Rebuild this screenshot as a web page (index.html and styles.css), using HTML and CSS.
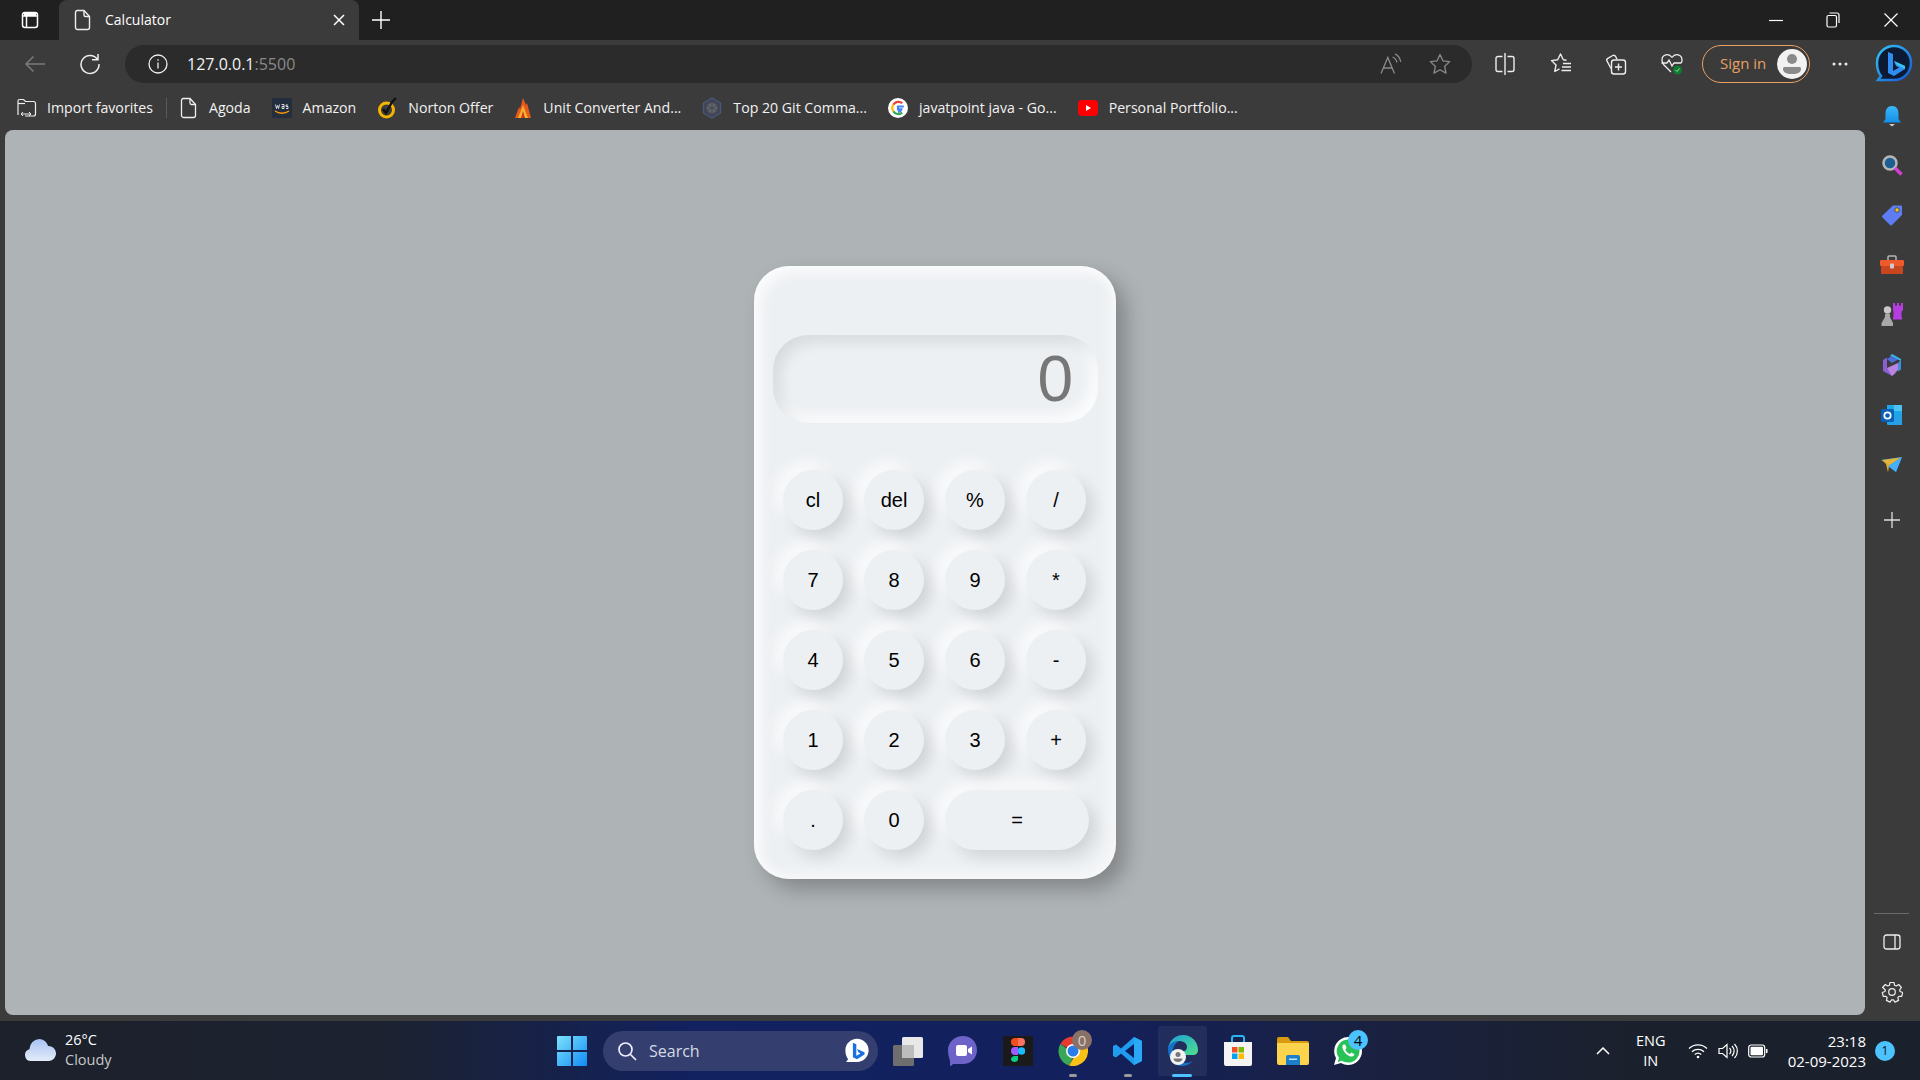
FILE: index.html
```html
<!DOCTYPE html>
<html lang="en">
<head>
  <meta charset="UTF-8">
  <title>Calculator</title>
  <link rel="stylesheet" href="styles.css">
</head>
<body>
  <div class="tabstrip">
    <svg class="tab-menu" width="20" height="20" viewBox="0 0 20 20" fill="none" stroke="#fff" stroke-width="1.5"><rect x="2.5" y="2.5" width="15" height="15" rx="2.5"/><path d="M2.5 6h15M6.5 6v11.5"/><path d="M4 3h12v3H4z" fill="#fff" stroke="none"/></svg>
    <div class="tab">
      <svg width="18" height="22" viewBox="0 0 18 22" fill="none" stroke="#eee" stroke-width="1.4"><path d="M3 1.5h7l5.5 6v11a2 2 0 0 1-2 2H3.500a2 2 0 0 1-2-2v-15a2 2 0 0 1 1.500-2z"/><path d="M10 1.500v4.500a1.500 1.500 0 0 0 1.500 1.500h4"/></svg>
      <span class="tab-title">Calculator</span>
      <svg class="tab-close" width="14" height="14" viewBox="0 0 14 14" stroke="#fff" stroke-width="1.5"><path d="M2 2l10 10M12 2L2 12"/></svg>
    </div>
    <svg class="tab-new" width="18" height="18" viewBox="0 0 18 18" stroke="#fff" stroke-width="1.4"><path d="M9 0v18M0 9h18"/></svg>
    <div class="win-controls">
      <svg class="win-min" width="14" height="14" viewBox="0 0 14 14" stroke="#fff" stroke-width="1.2"><path d="M0 7.500h14"/></svg>
      <svg width="14" height="16" viewBox="0 0 14 16" fill="none" stroke="#fff" stroke-width="1.2"><rect x="1" y="3.500" width="9.500" height="11.500" rx="1.500"/><path d="M3.500 1h7.500a2 2 0 0 1 2 2v8"/></svg>
      <svg width="14" height="14" viewBox="0 0 14 14" stroke="#fff" stroke-width="1.2"><path d="M.5.500l13 13M13.500.500l-13 13"/></svg>
    </div>
  </div>

  <div class="toolbar">
    <svg class="tool back" width="22" height="18" viewBox="0 0 22 18" fill="none" stroke="#7b7b7b" stroke-width="1.500"><path d="M21 9H2M9.500 1.500L2 9l7.500 7.500"/></svg>
    <svg class="tool reload" width="22" height="22" viewBox="0 0 22 22" fill="none" stroke="#eee" stroke-width="1.500"><path d="M18.500 6.500A9 9 0 1 0 20 11"/><path d="M13 6.800h6V1"/></svg>
    <div class="address">
      <svg width="20" height="20" viewBox="0 0 20 20" fill="none" stroke="#eee" stroke-width="1.300"><circle cx="10" cy="10" r="9"/><path d="M10 8.500v6M10 5.200v1.600"/></svg>
      <span class="url">127.0.0.1<span class="port">:5500</span></span>
      <svg class="read-aloud" width="22" height="22" viewBox="0 0 22 22" fill="none" stroke="#8a8a8a" stroke-width="1.300"><path d="M1 20.500L7.800 4.500l6.700 16M3.300 15h9"/><path d="M12.500 4c2.500 1 4 3 4.500 5.500M15 .800c3 1.500 5 4 5.700 8"/></svg>
      <svg class="fav-star" width="22" height="22" viewBox="0 0 22 22" fill="none" stroke="#8a8a8a" stroke-width="1.300"><path d="M11 1.500l2.900 6.300 6.800.800-5 4.700 1.300 6.800-6-3.400-6 3.400 1.300-6.800-5-4.700 6.800-.800z" stroke-linejoin="round"/></svg>
    </div>
    <div class="tool-group">
      <svg class="tool-split" width="20" height="22" viewBox="0 0 20 22" fill="none" stroke="#eee" stroke-width="1.400"><path d="M10 0v22"/><path d="M7.500 3.500H3a2 2 0 0 0-2 2v11a2 2 0 0 0 2 2h4.500M12.500 3.500H17a2 2 0 0 1 2 2v11a2 2 0 0 1-2 2h-4.500"/></svg>
      <svg width="22" height="22" viewBox="0 0 22 22" fill="none" stroke="#eee" stroke-width="1.400"><path d="M16.500 7.200L13.300 6.800 10.500 1 7.700 6.800 1.500 7.600l4.500 4.300L4.800 18.500l4.700-2.600" stroke-linejoin="round"/><path d="M13 10.500h8M12 14h9M11.500 17.500h9.500"/></svg>
      <svg width="22" height="22" viewBox="0 0 22 22" fill="none" stroke="#eee" stroke-width="1.400"><path d="M6 15.500L2 8a2 2 0 0 1 .8-2.700l5-2.800a2 2 0 0 1 2.700.8l1.500 3"/><rect x="6.500" y="7" width="14" height="14" rx="2.500"/><path d="M13.500 10.500v7M10 14h7"/></svg>
      <svg width="24" height="24" viewBox="0 0 24 24" fill="none" stroke="#eee" stroke-width="1.300"><path d="M12 5.500C9 1 2 2 2 8c0 2 .8 3.500 2 5l7 7"/><path d="M12 5.500C15 1 22 2 22 8c0 1.200-.3 2.300-.8 3.300"/><path d="M1.500 11H7l2-3 3 6 2-3h7"/><circle cx="17.500" cy="18" r="4.500" fill="#0f7b2e" stroke="none"/><path d="M15.500 18l1.500 1.500 2.500-3" stroke="#9fdc9f" stroke-width="1"/></svg>
    </div>
    <div class="signin">
      <span class="signin-label">Sign in</span>
      <span class="avatar"><svg width="20" height="24" viewBox="0 0 20 24" fill="#8a8a8a"><circle cx="10" cy="7" r="5"/><path d="M2 15h16a2 2 0 0 1 1 2c0 3-3 5-9 5s-9-2-9-5a2 2 0 0 1 1-2z"/></svg></span>
    </div>
    <svg class="more" width="16" height="4" viewBox="0 0 16 4" fill="#eee"><circle cx="2" cy="2" r="1.500"/><circle cx="8" cy="2" r="1.500"/><circle cx="14" cy="2" r="1.500"/></svg>
    <svg class="bing" width="38" height="40" viewBox="0 0 38 40" fill="none"><defs><linearGradient id="bingRing" x1="0" y1="0" x2="1" y2="1"><stop offset="0" stop-color="#36c3f0"/><stop offset="1" stop-color="#1457d6"/></linearGradient></defs><path d="M19 2c9.500 0 17 7.500 17 17s-7.500 17-17 17H3l3-4C3.500 29 2 24 2 19 2 9.500 9.500 2 19 2z" fill="#0c1b33" stroke="url(#bingRing)" stroke-width="2.500"/><path d="M13 8l5 2v17l6-3.500-3-1.500-2-5 11 5v3l-11 7-6-3z" fill="#2f8cf0"/><path d="M19 17l11 5v3L22 21z" fill="#37c6f4"/></svg>
  </div>

  <div class="workspace">
    <div class="browser-left">
      <div class="bookmarks">
        <div class="bookmark bookmark-import">
          <svg width="20" height="20" viewBox="0 0 20 20" fill="none" stroke="#eee" stroke-width="1.200"><path d="M1 17V3a1.500 1.500 0 0 1 1.500-1.500h4l2 2h8a2 2 0 0 1 2 2v10.500a2 2 0 0 1-2 2H8"/><path d="M1 5.500h7"/><path d="M4 16h10M6 14l-2 2 2 2M12 14l2 2-2 2" stroke-width="1"/></svg>
          <span>Import favorites</span>
        </div>
        <span class="bookmark-sep"></span>
        <div class="bookmark">
          <svg width="18" height="22" viewBox="0 0 18 22" fill="none" stroke="#eee" stroke-width="1.300"><path d="M3 1.500h7l5.500 6v11a2 2 0 0 1-2 2H3.500a2 2 0 0 1-2-2v-15a2 2 0 0 1 1.500-2z"/><path d="M10 1.500v4.500a1.500 1.500 0 0 0 1.500 1.500h4"/></svg>
          <span>Agoda</span>
        </div>
        <div class="bookmark">
          <svg width="20" height="20" viewBox="0 0 20 20"><rect width="20" height="20" fill="#232f3e"/><path d="M3 13c4 3 10 3 14 0" fill="none" stroke="#f90" stroke-width="1.300"/><path d="M3.500 6.500l1 4 1-3 1 3 1-4M9.500 6.500h2.500v4M12 8.500h-2v2h2M16 7h-2v1.500h2v2h-2" fill="none" stroke="#fff" stroke-width=".8"/></svg>
          <span>Amazon</span>
        </div>
        <div class="bookmark">
          <svg width="20" height="22" viewBox="0 0 20 22" fill="none"><circle cx="9.500" cy="13" r="7" stroke="#f5b400" stroke-width="3"/><path d="M6 12l3 4L15 5l4-4" stroke="#111" stroke-width="2.400"/></svg>
          <span>Norton Offer</span>
        </div>
        <div class="bookmark">
          <svg width="18" height="22" viewBox="0 0 18 22"><path d="M9 1l3 7 1-2 4 15H1L5 10l1 2z" fill="#e8591c"/><path d="M9 8l3 8 2 5H4l2-5z" fill="#f7b32b"/><path d="M9 14l2 7H7z" fill="#c8391c"/></svg>
          <span>Unit Converter And...</span>
        </div>
        <div class="bookmark">
          <svg width="20" height="22" viewBox="0 0 20 22" fill="#3f4552" stroke="#48587e"><path d="M10 1l8.500 5v10L10 21l-8.500-5V6z" stroke-width="1.300"/><circle cx="10" cy="11" r="5.500" fill="#62656d" stroke="#4c4f58"/><path d="M10 5.500v11M5 8.500l10 5M15 8.500l-10 5" stroke="#3f4552" stroke-width=".8"/></svg>
          <span>Top 20 Git Comma...</span>
        </div>
        <div class="bookmark">
          <svg width="20" height="20" viewBox="0 0 20 20" fill="none"><circle cx="10" cy="10" r="10" fill="#fff"/><path d="M15.800 8.500H10v2.800h3.300c-.4 1.600-1.700 2.500-3.300 2.500" stroke="#4285f4" stroke-width="2.200"/><path d="M14.300 5.200a6 6 0 0 0-8.900 1.400" stroke="#ea4335" stroke-width="2.200"/><path d="M5.400 6.600a6 6 0 0 0 0 6.800" stroke="#fbbc05" stroke-width="2.200"/><path d="M5.400 13.400a6 6 0 0 0 8.800 1.300" stroke="#34a853" stroke-width="2.200"/></svg>
          <span>javatpoint java - Go...</span>
        </div>
        <div class="bookmark">
          <svg width="20" height="16" viewBox="0 0 20 16"><rect width="20" height="16" rx="4" fill="#f00"/><path d="M8 5l5 3-5 3z" fill="#fff"/></svg>
          <span>Personal Portfolio...</span>
        </div>
      </div>

      <main class="viewport">
        <div class="calculator">
          <div class="display">0</div>
          <div class="keys">
            <button>cl</button>
            <button>del</button>
            <button>%</button>
            <button>/</button>
            <button>7</button>
            <button>8</button>
            <button>9</button>
            <button>*</button>
            <button>4</button>
            <button>5</button>
            <button>6</button>
            <button>-</button>
            <button>1</button>
            <button>2</button>
            <button>3</button>
            <button>+</button>
            <button>.</button>
            <button>0</button>
            <button class="equals">=</button>
          </div>
        </div>
      </main>
    </div>

    <aside class="sidebar">
      <div class="side-icon side-bell">
        <svg width="20" height="22" viewBox="0 0 20 22"><defs><linearGradient id="bell" x1="0" y1="0" x2="0" y2="1"><stop offset="0" stop-color="#3ab8f8"/><stop offset="1" stop-color="#148fe8"/></linearGradient></defs><path d="M10 0c4.500 0 6.500 3.500 6.500 7.500V13l2.500 3.500H1L3.500 13V7.500C3.500 3.500 5.500 0 10 0z" fill="url(#bell)"/><path d="M7 18h6l-3 2.500z" fill="#ccc"/></svg>
      </div>
      <div class="side-icon">
        <svg width="22" height="22" viewBox="0 0 22 22" fill="none"><circle cx="9" cy="9" r="6.500" fill="#1d5e92" stroke="#b5b5b5" stroke-width="2.500"/><path d="M14 14l6.500 6.500" stroke="#d23fd2" stroke-width="3.500"/></svg>
      </div>
      <div class="side-icon">
        <svg width="22" height="22" viewBox="0 0 22 22"><path d="M12 1.500h8a1 1 0 0 1 1 1V11L11 21a1.500 1.500 0 0 1-2 0L1.500 13.500a1.500 1.500 0 0 1 0-2z" fill="#5f7df2"/><circle cx="16" cy="6" r="2.200" fill="#f5c518" stroke="#233" stroke-width=".7"/></svg>
      </div>
      <div class="side-icon">
        <svg width="24" height="20" viewBox="0 0 24 20"><path d="M8 5V2a1 1 0 0 1 1-1h6a1 1 0 0 1 1 1v3" fill="none" stroke="#b5b5b5" stroke-width="1.500"/><rect y="5" width="24" height="6" rx="1" fill="#ee5a2b"/><rect x="1" y="11" width="22" height="8" rx="1" fill="#c8461f"/><rect x="10" y="8.500" width="4" height="5" rx="1" fill="#ccc"/></svg>
      </div>
      <div class="side-icon">
        <svg width="24" height="24" viewBox="0 0 24 24"><path d="M14 0h2v2.500h2V0h2v2.500h2V0h2v7l-1.500 2V14H23v2.500h-9V14h.5V9L14 7z" fill="#b63ee0" transform="translate(-1 0)"/><circle cx="7.500" cy="7" r="3.700" fill="#c8c8c8"/><path d="M5 11h5v3l3 6v3H1.500v-3l3.500-6z" fill="#a8a8a8"/></svg>
      </div>
      <div class="side-icon">
        <svg width="22" height="24" viewBox="0 0 22 24" fill="none"><path d="M11 1l9 5v2L9 3z" fill="#35b8e8"/><path d="M20 6.500v10l-3 2V10z" fill="#3f8ce0"/><path d="M2 7l4-2.500L6 15l9 5-4 3-9-5z" fill="#8b5fd0"/><path d="M6 15l11-5v7l-6 6z" fill="#b886e0"/><path d="M6 6l5-3 6 3.500L11 10z" fill="#4d6ed8"/></svg>
      </div>
      <div class="side-icon">
        <svg width="22" height="22" viewBox="0 0 22 22"><path d="M6 1h15v19a1 1 0 0 1-1 1H7a1 1 0 0 1-1-1z" fill="#1ea7e8"/><path d="M13 1h8v6h-8z" fill="#4ec3f0"/><path d="M10 13l11-2v10H9z" fill="#27a0e8"/><rect y="5" width="13" height="13" rx="1.500" fill="#0a5fb8"/><circle cx="6.500" cy="11.500" r="3.200" fill="none" stroke="#fff" stroke-width="1.700"/></svg>
      </div>
      <div class="side-icon">
        <svg width="22" height="16" viewBox="0 0 22 16"><path d="M0 3l21-3-12 8z" fill="#38a5f5"/><path d="M21 0l-6 15-7-5z" fill="#2784e6"/><path d="M1 3l19-2.500L8 9l-1 6.500L5 7z" fill="#f5b622" opacity=".9"/><path d="M21 0L7 9l8 6z" fill="#46aff8"/></svg>
      </div>
      <div class="side-icon side-add">
        <svg width="16" height="16" viewBox="0 0 16 16" stroke="#ddd" stroke-width="1.300"><path d="M8 0v16M0 8h16"/></svg>
      </div>
      <div class="side-bottom">
        <span class="side-sep"></span>
        <div class="side-icon">
          <svg width="18" height="16" viewBox="0 0 18 16" fill="none" stroke="#eee" stroke-width="1.300"><rect x="1" y="1" width="16" height="14" rx="2.500"/><path d="M12 1v14"/></svg>
        </div>
        <div class="side-icon">
          <svg width="22" height="22" viewBox="0 0 22 22" fill="none" stroke="#eee" stroke-width="1.200"><path d="M9 1.500h4l.6 2.800 1.700.7 2.400-1.500 2.700 3-1.700 2.300.4 1.700 2.600 1-.9 3.900-2.800-.1-1.200 1.400.8 2.700-3.600 1.700-1.600-2.300h-1.800l-1.600 2.300-3.600-1.700.8-2.700-1.200-1.400-2.800.1-.9-3.900 2.600-1 .4-1.700L1.600 6.500l2.700-3 2.400 1.500 1.700-.7z" stroke-linejoin="round"/><circle cx="11" cy="11" r="3.300"/></svg>
        </div>
      </div>
    </aside>
  </div>

  <footer class="taskbar">
    <div class="weather">
      <svg width="32" height="24" viewBox="0 0 32 24"><defs><linearGradient id="cloud" x1="0" y1="0" x2="0" y2="1"><stop offset="0" stop-color="#a7c2f2"/><stop offset="1" stop-color="#e4ecfa"/></linearGradient></defs><path d="M7 23a6 6 0 0 1-1.500-11.800A10 10 0 0 1 15 1c4.500 0 8 3 9 7a7.500 7.500 0 0 1 1 15z" fill="url(#cloud)"/></svg>
      <div class="weather-text">
        <span>26°C</span>
        <span class="weather-sub">Cloudy</span>
      </div>
    </div>
    <div class="task-center">
      <svg class="start" width="30" height="30" viewBox="0 0 30 30"><defs><linearGradient id="win" x1="0" y1="0" x2="1" y2="1"><stop offset="0" stop-color="#7ee2fb"/><stop offset="1" stop-color="#0f8cf5"/></linearGradient></defs><path d="M0 1a1 1 0 0 1 1-1h13v14H0zM16 0h13a1 1 0 0 1 1 1v13H16zM0 16h14v14H1a1 1 0 0 1-1-1zM16 16h14v13a1 1 0 0 1-1 1H16z" fill="url(#win)"/></svg>
      <div class="search">
        <svg width="20" height="20" viewBox="0 0 20 20" fill="none" stroke="#eef" stroke-width="1.700"><circle cx="8.500" cy="8.500" r="6.500"/><path d="M13.500 13.500l5.500 5.500"/></svg>
        <span>Search</span>
        <svg class="search-bing" width="26" height="28" viewBox="0 0 38 40"><path d="M19 2c9.500 0 17 7.500 17 17s-7.500 17-17 17H3l3-4C3.500 29 2 24 2 19 2 9.500 9.500 2 19 2z" fill="#fff"/><path d="M13 8l5 2v17l6-3.500-3-1.500-2-5 11 5v3l-11 7-6-3z" fill="#1b6fe0"/></svg>
      </div>
      <div class="task-icon">
        <svg width="30" height="30" viewBox="0 0 30 30"><rect x="9" y="1" width="21" height="21" rx="1.500" fill="#e8e8e8"/><rect y="9" width="21" height="21" rx="1.500" fill="#6e6e6e"/><rect x="9" y="9" width="12" height="13" fill="#bdbdbd"/></svg>
      </div>
      <div class="task-icon">
        <svg width="30" height="32" viewBox="0 0 30 32"><path d="M15 1c8 0 14 6 14 14s-6 14-14 14H5l-2 2c-1 0-1-1-1-2v-3C1 23 0 19 0 15 0 7 7 1 15 1z" fill="#6e63c8"/><rect x="8" y="10" width="11" height="11" rx="2" fill="#fff"/><path d="M20 14l4-2.500v8L20 17z" fill="#fff"/></svg>
      </div>
      <div class="task-icon">
        <span class="figma-tile">
          <svg width="14" height="26" viewBox="0 0 14 26"><path d="M0 4a4 4 0 0 1 4-4h3v8H4a4 4 0 0 1-4-4z" fill="#f24e1e"/><path d="M7 0h3a4 4 0 0 1 0 8H7z" fill="#ff7262"/><path d="M0 13a4 4 0 0 1 4-4h3v8H4a4 4 0 0 1-4-4z" fill="#a259ff"/><circle cx="10.500" cy="13" r="3.800" fill="#1abcfe"/><path d="M0 22a4 4 0 0 1 4-4h3v4a4 4 0 0 1-7 0z" fill="#0acf83"/></svg>
        </span>
      </div>
      <div class="task-icon running">
        <svg width="30" height="30" viewBox="0 0 30 30"><path d="M15 15L2.300 8A15 15 0 0 1 28 7.500H15z" fill="#e33b2e"/><path d="M2.300 8A15 15 0 0 0 11 29.500L17 18z" fill="#3aa757"/><path d="M28 7.500A15 15 0 0 1 11 29.500L19 16z" fill="#fbc116"/><circle cx="15" cy="15" r="7" fill="#fff"/><circle cx="15" cy="15" r="5.500" fill="#2a7de8"/></svg>
        <span class="count chrome-count">0</span>
      </div>
      <div class="task-icon running">
        <svg width="30" height="30" viewBox="0 0 30 30"><path d="M21 1l8 4v20l-8 4L8 17.500 3 21.500 0 20V10l3-1.500 5 4z" fill="#1f9cf0"/><path d="M21 8L12 15l9 7z" fill="#0b1e5c"/><path d="M21 1l8 4v20l-8 4z" fill="#2aa8f5"/></svg>
      </div>
      <div class="task-icon active">
        <svg width="32" height="34" viewBox="0 0 32 34"><defs><linearGradient id="edge" x1="0" y1="0" x2="1" y2="1"><stop offset="0" stop-color="#1e9fd8"/><stop offset="1" stop-color="#4fe08a"/></linearGradient></defs><path d="M16 1c9 0 15 7 15 15 0 3-2 5-5 5h-7c-2 0-3-1-3-2 0-2 4-2 4-6 0-4-4-6-8-6-5 0-10 4-11 8C2 7 8 1 16 1z" fill="url(#edge)"/><path d="M1 15c0-4 5-8 11-8-5 3-7 8-6 13 1 5 5 9 12 9 3 0 6-1 8-2-3 3-7 5-11 5C7 32 1 25 1 15z" fill="#1470c8"/><circle cx="11" cy="23" r="8" fill="#f2f2f2"/><circle cx="11" cy="20.500" r="2.500" fill="#777"/><path d="M6.500 24.500h9c0 2-2 3.500-4.500 3.500s-4.500-1.500-4.500-3.500z" fill="#777"/></svg>
      </div>
      <div class="task-icon">
        <svg width="30" height="32" viewBox="0 0 30 32"><path d="M9 7V3a2 2 0 0 1 2-2h8a2 2 0 0 1 2 2v4" fill="none" stroke="#2bb5f0" stroke-width="2"/><path d="M1 7h28v22a2 2 0 0 1-2 2H3a2 2 0 0 1-2-2z" fill="#f4f4f4"/><rect x="9" y="12" width="5.500" height="5.500" fill="#f25022"/><rect x="15.500" y="12" width="5.500" height="5.500" fill="#7fba00"/><rect x="9" y="18.500" width="5.500" height="5.500" fill="#00a4ef"/><rect x="15.500" y="18.500" width="5.500" height="5.500" fill="#ffb900"/></svg>
      </div>
      <div class="task-icon">
        <svg width="32" height="28" viewBox="0 0 32 28"><path d="M0 2a2 2 0 0 1 2-2h9l3 4h16a2 2 0 0 1 2 2v4H0z" fill="#d99a10"/><path d="M0 6h32v20a2 2 0 0 1-2 2H2a2 2 0 0 1-2-2z" fill="#fbd34d"/><path d="M9 20a2 2 0 0 1 2-2h10a2 2 0 0 1 2 2v8H9z" fill="#1b7fc9"/><rect x="12" y="21.500" width="8" height="1.500" fill="#bfe4ff"/></svg>
      </div>
      <div class="task-icon">
        <svg width="30" height="30" viewBox="0 0 30 30"><path d="M15 1a14 14 0 0 1 0 28c-2.500 0-5-.700-7-2l-7 2 2-7A14 14 0 0 1 15 1z" fill="#fff"/><path d="M15 3.500a11.500 11.500 0 0 1 0 23c-2.300 0-4.300-.600-6-1.700l-4.300 1.200L6 21.800A11.500 11.500 0 0 1 15 3.500z" fill="#29c257"/><path d="M10.500 8.500c-1.500 1.200-1.500 3.300 0 6 1.500 2.700 4 5 7 6 1.700.400 3.500-.5 4-2.300l-3.200-1.700-1.500 1.500c-2-.8-3.700-2.500-4.500-4.500l1.300-1.500-1.500-3.500z" fill="#fff"/></svg>
        <span class="count whatsapp-count">4</span>
      </div>
    </div>
    <div class="tray">
      <svg class="tray-up" width="14" height="8" viewBox="0 0 14 8" fill="none" stroke="#fff" stroke-width="1.500"><path d="M1 7l6-6 6 6"/></svg>
      <div class="lang"><span>ENG</span><span>IN</span></div>
      <svg width="20" height="16" viewBox="0 0 20 16" fill="none" stroke="#fff" stroke-width="1.300"><path d="M1 5.500a13 13 0 0 1 18 0M4 8.700a9 9 0 0 1 12 0M6.800 11.500a5 5 0 0 1 6.400 0"/><circle cx="10" cy="14" r="1.300" fill="#fff" stroke="none"/></svg>
      <svg width="20" height="16" viewBox="0 0 20 16" fill="none" stroke="#fff" stroke-width="1.200"><path d="M1 5.500h3.500L9 1.500v13l-4.500-4H1z"/><path d="M11.500 5a4 4 0 0 1 0 6M14 3a7 7 0 0 1 0 10M16.500 1a10 10 0 0 1 0 14"/></svg>
      <svg width="20" height="14" viewBox="0 0 20 14"><rect x=".7" y="1" width="16" height="12" rx="2.500" fill="none" stroke="#fff" stroke-width="1.200"/><rect x="2.500" y="2.800" width="12.500" height="8.400" rx="1" fill="#fff"/><path d="M18 5h1.500v4H18z" fill="#fff"/></svg>
      <div class="clock"><span>23:18</span><span>02-09-2023</span></div>
      <span class="notify">1</span>
    </div>
  </footer>
</body>
</html>
```

FILE: styles.css
```css
* {
  box-sizing: border-box;
}
body {
  margin: 0;
  width: 1920px;
  height: 1080px;
  overflow: hidden;
  display: flex;
  flex-direction: column;
  background-color: #3b3b3b;
  color: #fff;
  font-family: "Open Sans", "Noto Sans", sans-serif;
  font-size: 14px;
}
svg {
  flex-shrink: 0;
  display: block;
}

/* title strip */
.tabstrip {
  height: 40px;
  display: flex;
  align-items: center;
  background-color: #202020;
  padding-left: 20px;
}
.tab {
  height: 40px;
  width: 300px;
  margin-left: 19px;
  padding: 0 13px 0 15px;
  display: flex;
  align-items: center;
  background-color: #3b3b3b;
  border-radius: 8px 8px 0 0;
}
.tab-title {
  margin-left: 13px;
  padding-bottom: 2px;
}
.tab-close {
  margin-left: auto;
}
.tab-new {
  margin-left: 13px;
}
.win-controls {
  margin-left: auto;
  margin-right: 22px;
  display: flex;
  align-items: center;
  gap: 44px;
}
.win-min {
  margin-right: -1px;
}

/* toolbar */
.toolbar {
  height: 43px;
  padding-top: 5px;
  display: flex;
  align-items: center;
  background-color: #3b3b3b;
}
.back {
  margin-left: 24px;
}
.reload {
  margin-left: 33px;
}
.address {
  width: 1347px;
  height: 38px;
  margin-left: 24px;
  padding: 0 21px 0 23px;
  display: flex;
  align-items: center;
  background-color: #2b2b2b;
  border-radius: 19px;
}
.url {
  margin-left: 19px;
  font-size: 16px;
  color: #f2f2f2;
}
.port {
  color: #8a8a8a;
}
.read-aloud {
  margin-left: auto;
}
.fav-star {
  margin-left: 27px;
}
.tool-group {
  margin-left: 23px;
  display: flex;
  align-items: center;
  gap: 33px;
}
.tool-split {
  margin-right: 2px;
}
.signin {
  width: 108px;
  height: 38px;
  margin-left: 18px;
  padding: 0 2px 0 17px;
  display: flex;
  align-items: center;
  justify-content: space-between;
  border: 1.5px solid #e8a063;
  border-radius: 19px;
  color: #e8a063;
  font-size: 15px;
}
.signin-label {
  padding-bottom: 2px;
}
.avatar {
  width: 30px;
  height: 30px;
  display: flex;
  align-items: center;
  justify-content: center;
  background-color: #f2f2f2;
  border-radius: 50%;
}
.more {
  margin-left: 22px;
}
.bing {
  margin-left: 27px;
}

/* bookmarks + page */
.workspace {
  flex: 1;
  display: flex;
  min-height: 0;
}
.browser-left {
  flex: 1;
  display: flex;
  flex-direction: column;
}
.bookmarks {
  height: 47px;
  padding: 2px 0 0 17px;
  display: flex;
  align-items: center;
  gap: 21px;
  font-size: 14.15px;
}
.bookmark {
  display: flex;
  align-items: center;
  gap: 11px;
  color: #f2f2f2;
}
.bookmark-import {
  gap: 10px;
}
.bookmark-sep {
  width: 1px;
  height: 20px;
  margin: 0 -8px;
  background-color: #5a5a5a;
}
.viewport {
  flex: 1;
  margin-left: 5px;
  display: flex;
  align-items: center;
  justify-content: center;
  background-color: #aeb3b5;
  border-radius: 8px;
}

/* the calculator */
.calculator {
  width: 362px;
  height: 613px;
  padding: 69px 19px 0;
  background-color: #edf0f3;
  border-radius: 35px;
  box-shadow: 10px 10px 20px rgba(0, 0, 0, 0.25), inset 6px 6px 14px rgba(255, 255, 255, 0.8), inset -6px -6px 14px rgba(255, 255, 255, 0.5);
}
.display {
  width: 325px;
  height: 88px;
  padding-right: 25px;
  text-align: right;
  line-height: 88px;
  font-family: "Liberation Sans", Arial, sans-serif;
  font-size: 64px;
  color: #777;
  border-radius: 35px;
  box-shadow: inset 7px 7px 14px rgba(0, 0, 0, 0.09), inset -7px -7px 14px rgba(255, 255, 255, 0.85);
}
.keys {
  margin: 47px 0 0 10px;
  display: grid;
  grid-template-columns: repeat(4, 60px);
  grid-auto-rows: 60px;
  column-gap: 21px;
  row-gap: 20px;
}
.keys button {
  padding: 0;
  border: none;
  border-radius: 30px;
  background-color: #edf0f3;
  color: #000;
  font-family: "Liberation Sans", Arial, sans-serif;
  font-size: 20px;
  box-shadow: 7px 7px 15px rgba(0, 0, 0, 0.12), -7px -7px 15px rgba(255, 255, 255, 0.75);
}
.keys .equals {
  grid-column: span 2;
  width: 144px;
}

/* edge sidebar */
.sidebar {
  width: 55px;
  padding: 7px 2px 0 0;
  display: flex;
  flex-direction: column;
  align-items: center;
}
.side-icon {
  height: 50px;
  width: 50px;
  display: flex;
  align-items: center;
  justify-content: center;
}
.side-bell {
  padding-top: 3px;
}
.side-add {
  margin-top: 5px;
}
.side-bottom {
  margin-top: auto;
  margin-bottom: -2px;
  display: flex;
  flex-direction: column;
  align-items: center;
}
.side-sep {
  width: 35px;
  height: 1px;
  margin-bottom: 3px;
  background-color: #6a6a6a;
}

/* taskbar */
.taskbar {
  height: 59px;
  margin-top: 6px;
  display: grid;
  grid-template-columns: 552px auto 1fr;
  align-items: center;
  background: linear-gradient(90deg, #1c212b 0%, #1c2230 20%, #12215f 36%, #12205e 55%, #1a2140 72%, #1b212c 85%, #1b212c 100%);
}
.weather {
  padding: 0 0 2px 24px;
  display: flex;
  align-items: center;
  gap: 9px;
}
.weather-text {
  display: flex;
  flex-direction: column;
  line-height: 20px;
  font-size: 14.5px;
}
.weather-sub {
  color: #c8c8c8;
}
.task-center {
  display: flex;
  align-items: center;
}
.start {
  margin-left: 5px;
}
.search {
  width: 275px;
  height: 40px;
  margin-left: 16px;
  margin-right: 2px;
  padding: 0 8px 0 14px;
  display: flex;
  align-items: center;
  gap: 12px;
  background-color: #343f70;
  border-radius: 20px;
  font-size: 16px;
  color: #d6d9e4;
}
.search-bing {
  margin-left: auto;
}
.task-icon {
  position: relative;
  width: 55px;
  height: 50px;
  display: flex;
  align-items: center;
  justify-content: center;
}
.task-icon.running::after {
  content: "";
  position: absolute;
  left: 24px;
  bottom: -1px;
  width: 8px;
  height: 3px;
  border-radius: 2px;
  background-color: #9a9a9a;
}
.task-icon.active {
  background-color: rgba(255, 255, 255, 0.06);
  border-radius: 5px;
  background-clip: content-box;
  padding: 0 3px;
}
.task-icon.active::after {
  content: "";
  position: absolute;
  left: 17px;
  bottom: -1px;
  width: 20px;
  height: 3px;
  border-radius: 2px;
  background-color: #4cc2ff;
}
.figma-tile {
  width: 30px;
  height: 30px;
  display: flex;
  align-items: center;
  justify-content: center;
  background-color: #1a1a1a;
}
.count {
  position: absolute;
  top: 4px;
  width: 20px;
  height: 20px;
  border-radius: 50%;
  display: flex;
  align-items: center;
  justify-content: center;
  font-size: 15px;
}
.chrome-count {
  left: 27px;
  background-color: #8a7168;
  color: #d8d0c8;
}
.whatsapp-count {
  left: 28px;
  background-color: #4cc2ff;
  color: #000;
}
.tray {
  display: flex;
  align-items: center;
  justify-content: flex-end;
  padding-right: 25px;
}
.tray-up {
  margin-right: 24px;
}
.lang {
  width: 34px;
  margin-right: 20px;
  display: flex;
  flex-direction: column;
  align-items: center;
  line-height: 20px;
  font-size: 14.5px;
}
.tray svg + svg {
  margin-left: 10px;
}
.clock {
  margin-left: 20px;
  display: flex;
  flex-direction: column;
  align-items: flex-end;
  line-height: 20px;
  font-size: 15px;
}
.notify {
  width: 20px;
  height: 20px;
  margin-left: 9px;
  display: flex;
  align-items: center;
  justify-content: center;
  background-color: #4cc2ff;
  color: #111;
  border-radius: 50%;
  font-size: 12px;
}
```
